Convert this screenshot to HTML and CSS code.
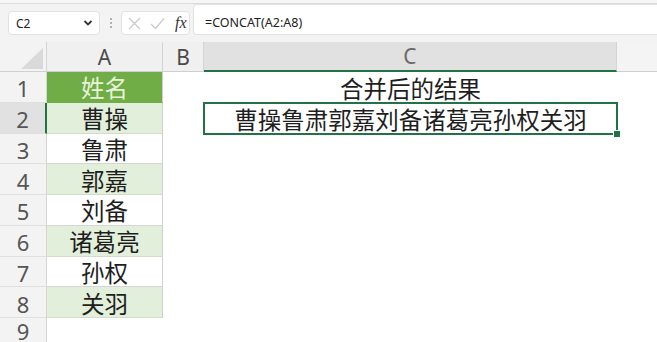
FILE: index.html
```html
<!DOCTYPE html>
<html lang="zh-CN">
<head>
  <meta charset="UTF-8">
  <meta name="viewport" content="width=device-width, initial-scale=1.0">
  <title>CONCAT</title>
  <link rel="stylesheet" href="styles.css">
</head>
<body>
  <div class="topline"></div>
  <div class="toolbar">
    <div class="namebox">
      <span>C2</span>
      <svg class="chev" width="10" height="8" viewBox="0 0 10 8"><path d="M1.5 2 L5 5.5 L8.5 2" fill="none" stroke="#333" stroke-width="1.8"/></svg>
    </div>
    <div class="dots"><i></i><i></i><i></i></div>
    <div class="fxbox">
      <svg width="13" height="13" viewBox="0 0 13 13"><path d="M1 1 L12 12 M12 1 L1 12" stroke="#c9c9c9" stroke-width="1.2" fill="none"/></svg>
      <svg width="15" height="13" viewBox="0 0 15 13"><path d="M1 7 L5.5 11.5 L14 1.5" stroke="#c9c9c9" stroke-width="1.2" fill="none"/></svg>
      <span class="fx">fx</span>
    </div>
    <div class="formula">=CONCAT(A2:A8)</div>
  </div>

  <div class="sheet">
    <div class="corner"></div>
    <div class="col-head">A</div>
    <div class="col-head">B</div>
    <div class="col-head active">C</div>
    <div class="col-head rest"></div>

    <div class="row-head">1</div>
    <div class="cell a title">姓名</div>
    <div class="cell"></div>
    <div class="cell c">合并后的结果</div>
    <div class="cell"></div>

    <div class="row-head active">2</div>
    <div class="cell a alt">曹操</div>
    <div class="cell"></div>
    <div class="cell c selected">曹操鲁肃郭嘉刘备诸葛亮孙权关羽</div>
    <div class="cell"></div>

    <div class="row-head">3</div>
    <div class="cell a">鲁肃</div>
    <div class="cell"></div>
    <div class="cell c"></div>
    <div class="cell"></div>

    <div class="row-head">4</div>
    <div class="cell a alt">郭嘉</div>
    <div class="cell"></div>
    <div class="cell c"></div>
    <div class="cell"></div>

    <div class="row-head">5</div>
    <div class="cell a">刘备</div>
    <div class="cell"></div>
    <div class="cell c"></div>
    <div class="cell"></div>

    <div class="row-head">6</div>
    <div class="cell a alt">诸葛亮</div>
    <div class="cell"></div>
    <div class="cell c"></div>
    <div class="cell"></div>

    <div class="row-head">7</div>
    <div class="cell a">孙权</div>
    <div class="cell"></div>
    <div class="cell c"></div>
    <div class="cell"></div>

    <div class="row-head">8</div>
    <div class="cell a alt">关羽</div>
    <div class="cell"></div>
    <div class="cell c"></div>
    <div class="cell"></div>

    <div class="row-head last">9</div>
    <div class="cell"></div>
    <div class="cell"></div>
    <div class="cell c"></div>
    <div class="cell"></div>
  </div>
</body>
</html>
```

FILE: styles.css
```css
* {
  box-sizing: border-box;
}
body {
  margin: 0;
  width: 657px;
  height: 342px;
  overflow: hidden;
  background-color: #f3f3f3;
  font-family: "Noto Sans", "Noto Sans CJK SC", sans-serif;
  color: #222;
}
.topline {
  height: 4px;
  background-color: #f6f6f6;
  border-bottom: 1px solid #dcdcdc;
}
.toolbar {
  height: 38px;
  display: flex;
  align-items: flex-end;
  padding: 0 0 7px 8px;
}
.namebox {
  width: 92px;
  height: 24px;
  background: #fff;
  border: 1px solid #e2e2e2;
  border-radius: 4px;
  display: flex;
  align-items: center;
  justify-content: space-between;
  padding: 0 6px 0 7px;
  font-size: 12px;
}
.dots {
  width: 21px;
  height: 24px;
  display: flex;
  flex-direction: column;
  align-items: center;
  justify-content: center;
  gap: 2px;
}
.dots i {
  width: 2px;
  height: 2px;
  border-radius: 1px;
  background: #9a9a9a;
}
.fxbox {
  width: 69px;
  height: 24px;
  background: #fff;
  border: 1px solid #e2e2e2;
  border-radius: 4px;
  display: flex;
  align-items: center;
  gap: 9px;
  padding-left: 6px;
}
.fx {
  font-family: "Liberation Serif", serif;
  font-style: italic;
  font-size: 16px;
  color: #333;
  margin-left: 1px;
}
.formula {
  flex: 1;
  height: 31px;
  margin-left: 3px;
  background: #fff;
  border: 1px solid #e2e2e2;
  border-right: none;
  border-radius: 4px 0 0 4px;
  padding: 9px 0 0 11px;
  font-size: 12.5px;
}
.sheet {
  display: grid;
  grid-template-columns: 47px 116px 41px 413px 1fr;
  grid-template-rows: 30px repeat(8, 30.75px) 1fr;
  height: 300px;
  background: #fff;
}
.corner {
  position: relative;
  background: #f3f3f3;
  border-right: 1px solid #d4d4d4;
  border-bottom: 1px solid #d0d0d0;
}
.corner::after {
  content: "";
  position: absolute;
  right: 3px;
  bottom: 2px;
  width: 22px;
  height: 21px;
  background: #d9d9d9;
  clip-path: polygon(100% 0, 100% 100%, 0 100%);
}
.col-head {
  background: #f0f0f0;
  border-right: 1px solid #d4d4d4;
  border-bottom: 1px solid #cfcfcf;
  display: flex;
  align-items: flex-end;
  justify-content: center;
  padding-bottom: 1px;
  font-size: 21px;
  line-height: 1.2;
  color: #4a4a4a;
}
.col-head.active {
  background: #e1e1e1;
  border-bottom: 2px solid #217346;
  color: #6a6a6a;
}
.col-head.rest {
  background: #f4f4f4;
  border-right: none;
}
.row-head {
  background: #f3f3f3;
  border-right: 1px solid #d4d4d4;
  border-bottom: 1px solid #e0e0e0;
  display: flex;
  align-items: flex-end;
  justify-content: center;
  font-size: 22px;
  line-height: 1.2;
  color: #555;
}
.row-head.active {
  background: #e1e1e1;
  border-right: 2px solid #217346;
}
.row-head.last {
  border-bottom: none;
}
.cell {
  display: flex;
  align-items: flex-end;
  justify-content: center;
  font-family: "Noto Sans CJK SC", sans-serif;
  font-size: 23.5px;
  line-height: 1;
  padding-bottom: 2px;
  color: #1e1e1e;
}
.cell.a {
  border-right: 1px solid #cfcfcf;
  border-bottom: 1px solid #d6d6d6;
}
.cell.a.alt {
  background: #e2efda;
  border-bottom-color: #d2dccb;
}
.cell.a.title {
  background: #70ad47;
  color: #e7f3d9;
  border-bottom-color: #70ad47;
}
.cell.selected {
  position: relative;
}
.cell.selected::after {
  content: "";
  position: absolute;
  top: -1px;
  left: -1px;
  right: -1px;
  bottom: -1px;
  border: 2px solid #217346;
}
.cell.selected::before {
  content: "";
  position: absolute;
  right: -4px;
  bottom: -4px;
  width: 6px;
  height: 6px;
  background: #217346;
  border: 1px solid #fff;
  z-index: 1;
}
```
